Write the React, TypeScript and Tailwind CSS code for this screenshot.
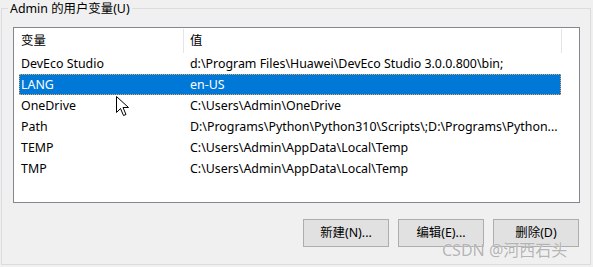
import React from "react";

const rows = [
  ["DevEco Studio", "d:\\Program Files\\Huawei\\DevEco Studio 3.0.0.800\\bin;"],
  ["LANG", "en-US"],
  ["OneDrive", "C:\\Users\\Admin\\OneDrive"],
  ["Path", "D:\\Programs\\Python\\Python310\\Scripts\\;D:\\Programs\\Python..."],
  ["TEMP", "C:\\Users\\Admin\\AppData\\Local\\Temp"],
  ["TMP", "C:\\Users\\Admin\\AppData\\Local\\Temp"],
];

const font = { fontFamily: '"Noto Sans", "Noto Sans CJK SC", sans-serif' };

export default function App() {
  return (
    <div
      className="relative w-[593px] h-[267px] bg-[#f0f0f0] overflow-hidden text-[12.4px] text-black"
      style={font}
    >
      <div className="relative ml-[1px] mt-[8px] w-[590px] h-[257px] border border-[#dcdcdc]">
        <div className="absolute left-[6px] top-[-9px] px-[2px] bg-[#f0f0f0] leading-[17px] whitespace-nowrap">
          Admin 的用户变量(U)
        </div>
        <div className="ml-[11px] mt-[18px] w-[567px] h-[176px] border border-[#828790] bg-white overflow-hidden">
          <div className="flex h-[25px] items-center ml-[5px]">
            <div className="w-[164px] shrink-0 pl-[2px] pt-[2px]">变量</div>
            <div className="w-px h-[24px] shrink-0 bg-[#e5e5e5]" />
            <div className="w-[377px] shrink-0 pl-[6px] pt-[2px]">值</div>
            <div className="w-px h-[24px] shrink-0 bg-[#e5e5e5]" />
          </div>
          <div className="ml-[5px] w-[542px]">
            {rows.map(([k, v], i) => {
              const sel = i === 1;
              return (
                <div
                  key={k}
                  className={
                    sel
                      ? "flex h-[21px] items-center pt-[1px] bg-[#0078d7] text-white border border-dotted border-[#e9a65a]"
                      : "flex h-[21px] items-center pt-[1px] border border-transparent"
                  }
                >
                  <div className="w-[170px] shrink-0 pl-[1px] whitespace-nowrap">{k}</div>
                  <div className="whitespace-nowrap overflow-hidden">{v}</div>
                </div>
              );
            })}
          </div>
        </div>
        <div className="flex justify-end gap-[9px] mt-[16px] mr-[11px]">
          {["新建(N)...", "编辑(E)...", "删除(D)"].map((t) => (
            <div
              key={t}
              className="w-[86px] h-[28px] flex items-center justify-center bg-[#e1e1e1] border border-[#adadad]"
            >
              {t}
            </div>
          ))}
        </div>
      </div>
      <div className="absolute left-[442px] top-[242px] text-[16px] text-[#a0a0a0]/80 leading-[16px] whitespace-nowrap [text-shadow:0_0_1px_#ffffff]">
        CSDN @河西石头
      </div>
      <svg
        className="absolute left-[116px] top-[96px]"
        width="14"
        height="21"
        viewBox="0 0 14 21"
      >
        <path
          d="M0.5 0.5 L0.5 16.5 L4.5 12.5 L7.5 19.5 L10 18.5 L7 11.5 L12.5 11.5 Z"
          fill="#ffffff"
          stroke="#000000"
          strokeWidth="1"
          strokeLinejoin="miter"
        />
      </svg>
    </div>
  );
}
